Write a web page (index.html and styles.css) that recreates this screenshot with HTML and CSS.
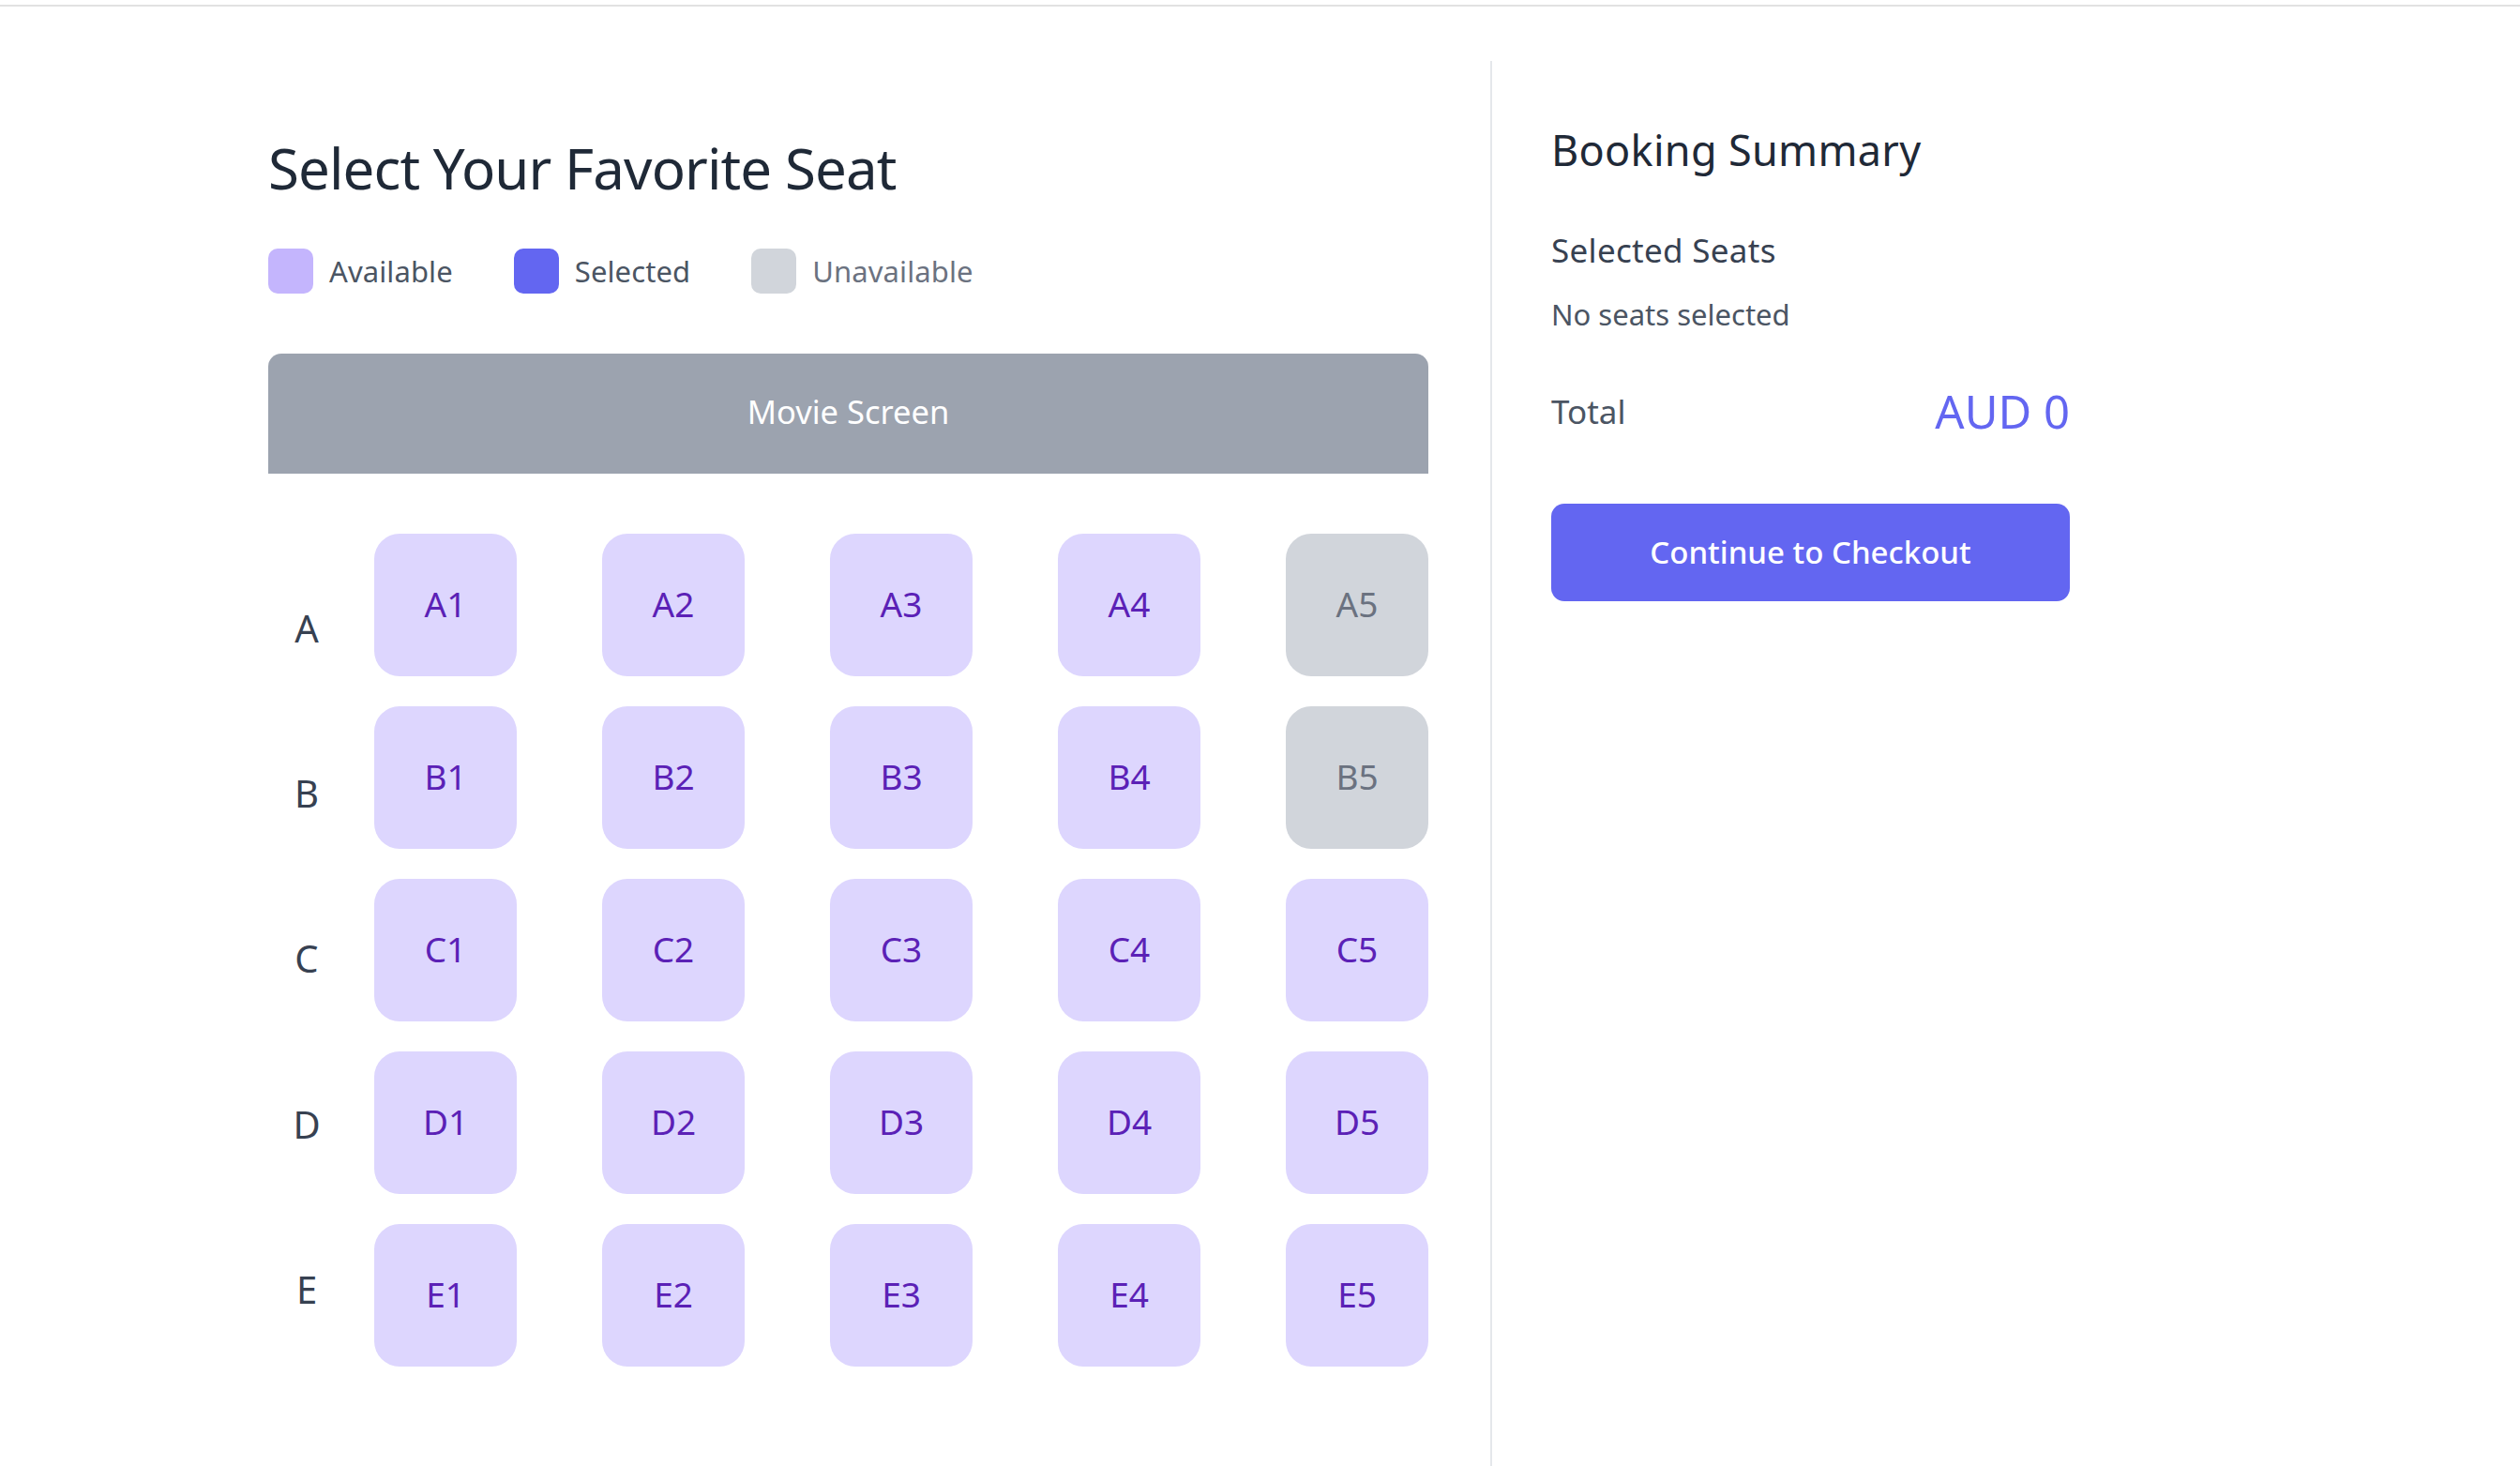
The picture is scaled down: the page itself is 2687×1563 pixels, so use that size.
FILE: index.html
```html
<!DOCTYPE html>
<html lang="en">
<head>
<meta charset="utf-8">
<title>Select Your Favorite Seat</title>
<link rel="stylesheet" href="styles.css">
</head>
<body>
<div class="topbar"></div>
<main class="layout">
  <section class="seat-panel">
    <h1 class="title">Select Your Favorite Seat</h1>
    <div class="legend">
      <div class="legend-item"><span class="swatch swatch-available"></span><span class="legend-label">Available</span></div>
      <div class="legend-item"><span class="swatch swatch-selected"></span><span class="legend-label">Selected</span></div>
      <div class="legend-item"><span class="swatch swatch-unavailable"></span><span class="legend-label legend-label-muted">Unavailable</span></div>
    </div>
    <div class="screen">Movie Screen</div>
    <div class="hall">
      <div class="row-labels">
        <div class="row-label">A</div>
        <div class="row-label">B</div>
        <div class="row-label">C</div>
        <div class="row-label">D</div>
        <div class="row-label">E</div>
      </div>
      <div class="seat-grid">
        <button class="seat">A1</button>
        <button class="seat">A2</button>
        <button class="seat">A3</button>
        <button class="seat">A4</button>
        <button class="seat seat-unavailable">A5</button>
        <button class="seat">B1</button>
        <button class="seat">B2</button>
        <button class="seat">B3</button>
        <button class="seat">B4</button>
        <button class="seat seat-unavailable">B5</button>
        <button class="seat">C1</button>
        <button class="seat">C2</button>
        <button class="seat">C3</button>
        <button class="seat">C4</button>
        <button class="seat">C5</button>
        <button class="seat">D1</button>
        <button class="seat">D2</button>
        <button class="seat">D3</button>
        <button class="seat">D4</button>
        <button class="seat">D5</button>
        <button class="seat">E1</button>
        <button class="seat">E2</button>
        <button class="seat">E3</button>
        <button class="seat">E4</button>
        <button class="seat">E5</button>
      </div>
    </div>
  </section>
  <aside class="summary">
    <h2 class="summary-title">Booking Summary</h2>
    <h3 class="summary-subtitle">Selected Seats</h3>
    <p class="summary-empty">No seats selected</p>
    <div class="total-row">
      <span class="total-label">Total</span>
      <span class="total-value">AUD 0</span>
    </div>
    <button class="checkout">Continue to Checkout</button>
  </aside>
</main>
</body>
</html>
```
FILE: styles.css
```css
* { box-sizing: border-box; }

html, body {
  margin: 0;
  padding: 0;
  background: #ffffff;
  font-family: "Noto Sans", "Open Sans", sans-serif;
}

.topbar {
  height: 7px;
  border-bottom: 2px solid #e2e2e2;
}

.layout {
  display: flex;
  margin-top: 58px;
  min-height: calc(100vh - 65px);
}

.seat-panel {
  width: 1591px;
  padding: 0 66px 0 286px;
  border-right: 2px solid #e5e7eb;
}

.title {
  margin: 77.7px 0 0;
  font-size: 60px;
  line-height: 72px;
  font-weight: 400;
  color: #1f2937;
  letter-spacing: -0.9px;
}

.legend {
  display: flex;
  align-items: center;
  gap: 65px;
  margin-top: 50.3px;
  height: 48px;
}

.legend-item {
  display: flex;
  align-items: center;
  gap: 17px;
}

.swatch {
  width: 48px;
  height: 48px;
  border-radius: 10px;
  display: block;
}

.swatch-available { background: #c4b5fd; }
.swatch-selected { background: #6366f1; }
.swatch-unavailable { background: #d1d5db; }

.legend-label {
  font-size: 31px;
  line-height: 42px;
  color: #4b5563;
  letter-spacing: 0.1px;
}

.legend-label-muted { color: #6b7280; }

.screen {
  margin-top: 64px;
  height: 128px;
  background: #9ca3af;
  border-radius: 14px 14px 0 0;
  display: flex;
  align-items: center;
  justify-content: center;
  color: #ffffff;
  font-size: 34.5px;
  padding-bottom: 4px;
}

.hall {
  display: flex;
  margin-top: 64px;
}

.row-labels {
  width: 82px;
  margin-right: 31px;
  padding-top: 13.3px;
  display: flex;
  flex-direction: column;
}

.row-label {
  height: 176.1px;
  line-height: 176.1px;
  text-align: center;
  font-size: 40px;
  color: #374151;
}

.seat-grid {
  display: grid;
  grid-template-columns: repeat(5, 152px);
  grid-auto-rows: 152px;
  column-gap: 91px;
  row-gap: 32px;
}

.seat {
  border: none;
  margin: 0;
  padding: 0 0 2px;
  border-radius: 27px;
  background: #ddd6fe;
  color: #5b21b6;
  font-family: inherit;
  font-size: 37px;
  display: flex;
  align-items: center;
  justify-content: center;
  cursor: pointer;
}

.seat-unavailable {
  background: #d1d5db;
  color: #6b7280;
  cursor: not-allowed;
}

.summary {
  width: 616px;
  padding-left: 63px;
  display: flex;
  flex-direction: column;
}

.summary-title {
  margin: 68px 0 0;
  font-size: 45px;
  line-height: 53.5px;
  font-weight: 400;
  color: #1f2937;
  letter-spacing: 0.3px;
}

.summary-subtitle {
  margin: 56.2px 0 0;
  font-size: 35px;
  line-height: 48px;
  font-weight: 400;
  color: #374151;
  letter-spacing: 0.3px;
}

.summary-empty {
  margin: 23.5px 0 0;
  font-size: 31px;
  line-height: 43.4px;
  color: #4b5563;
}

.total-row {
  margin-top: 52px;
  display: flex;
  align-items: center;
  justify-content: space-between;
}

.total-label {
  font-size: 35px;
  line-height: 47.6px;
  color: #4b5563;
}

.total-value {
  font-size: 49px;
  line-height: 57.6px;
  color: #6366f1;
}

.checkout {
  margin-top: 69.5px;
  height: 104px;
  width: 100%;
  border: none;
  border-radius: 14px;
  background: #6366f1;
  color: #ffffff;
  font-family: inherit;
  font-size: 33px;
  font-weight: 500;
  cursor: pointer;
}
```
